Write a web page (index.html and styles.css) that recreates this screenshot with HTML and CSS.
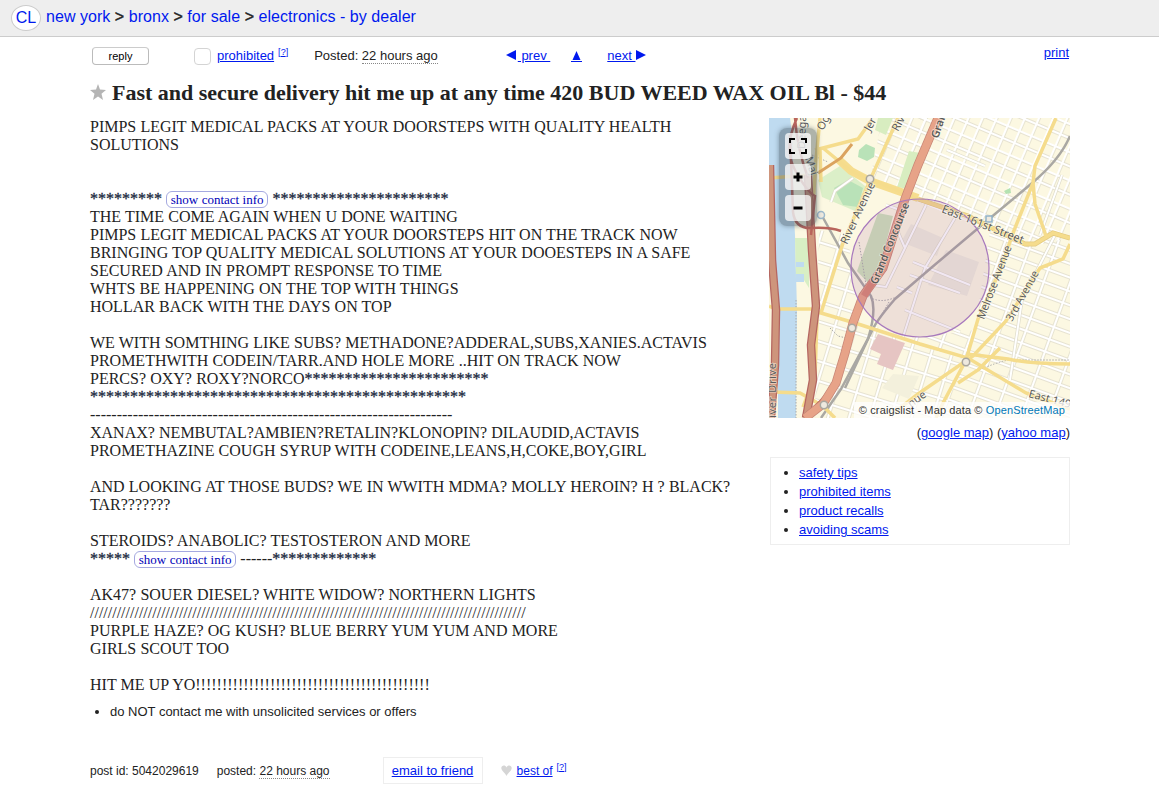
FILE: index.html
```html
<!DOCTYPE html>
<html lang="en">
<head>
<meta charset="utf-8">
<title>new york electronics - by dealer</title>
<link rel="stylesheet" href="styles.css">
</head>
<body>
<header class="crumbs">
  <a class="logo">CL</a>
  <nav><a>new york</a> <b>&gt;</b> <a>bronx</a> <b>&gt;</b> <a>for sale</a> <b>&gt;</b> <a>electronics - by dealer</a></nav>
</header>
<main class="page">
  <div class="toolbar">
    <button class="reply">reply</button>
    <span class="box"></span>
    <a class="link flag">prohibited</a><a class="help">[<u>?</u>]</a>
    <span class="posted">Posted: <span class="dotted">22 hours ago</span></span>
    <a class="link prev"><svg width="12" height="10"><path d="M0 5 10 0V10Z"/></svg> prev&nbsp;</a>
    <a class="link up"><svg width="11" height="10"><path d="M5.500 0 9.500 9H1.500Z"/></svg></a>
    <a class="link next">next <svg width="12" height="10"><path d="M11 5 1 0V10Z"/></svg></a>
    <a class="link print">print</a>
  </div>
  <h1 class="title"><svg class="star" width="17" height="16" viewBox="0 0 17 16"><path d="M8 0 10 5.600 16 6 11.500 9.700 13 16 8 12.500 3 16 4.500 9.700 0 6 6 5.600Z"/></svg><span>Fast and secure delivery hit me up at any time 420 BUD WEED WAX OIL Bl - $44</span></h1>
  <div class="columns">
    <section class="ad">
      <p>PIMPS LEGIT MEDICAL PACKS AT YOUR DOORSTEPS WITH QUALITY HEALTH</p>
      <p>SOLUTIONS</p>
      <p></p><p></p>
      <p><i>*********</i> <a class="contact">show contact info</a> <i>**********************</i></p>
      <p>THE TIME COME AGAIN WHEN U DONE WAITING</p>
      <p>PIMPS LEGIT MEDICAL PACKS AT YOUR DOORSTEPS HIT ON THE TRACK NOW</p>
      <p>BRINGING TOP QUALITY MEDICAL SOLUTIONS AT YOUR DOOESTEPS IN A SAFE</p>
      <p>SECURED AND IN PROMPT RESPONSE TO TIME</p>
      <p>WHTS BE HAPPENING ON THE TOP WITH THINGS</p>
      <p>HOLLAR BACK WITH THE DAYS ON TOP</p>
      <p></p>
      <p>WE WITH SOMTHING LIKE SUBS? METHADONE?ADDERAL,SUBS,XANIES.ACTAVIS</p>
      <p>PROMETHWITH CODEIN/TARR.AND HOLE MORE ..HIT ON TRACK NOW</p>
      <p>PERCS? OXY? ROXY?NORCO<i>***********************</i></p>
      <p><i>***********************************************</i></p>
      <p>--------------------------------------------------------------------</p>
      <p>XANAX? NEMBUTAL?AMBIEN?RETALIN?KLONOPIN? DILAUDID,ACTAVIS</p>
      <p>PROMETHAZINE COUGH SYRUP WITH CODEINE,LEANS,H,COKE,BOY,GIRL</p>
      <p></p>
      <p>AND LOOKING AT THOSE BUDS? WE IN WWITH MDMA? MOLLY HEROIN? H ? BLACK?</p>
      <p>TAR???????</p>
      <p></p>
      <p>STEROIDS? ANABOLIC? TESTOSTERON AND MORE</p>
      <p><i>*****</i> <a class="contact">show contact info</a> ------<i>*************</i></p>
      <p></p>
      <p>AK47? SOUER DIESEL? WHITE WIDOW? NORTHERN LIGHTS</p>
      <p>//////////////////////////////////////////////////////////////////////////////////////////////////</p>
      <p>PURPLE HAZE? OG KUSH? BLUE BERRY YUM YUM AND MORE</p>
      <p>GIRLS SCOUT TOO</p>
      <p></p>
      <p>HIT ME UP YO!!!!!!!!!!!!!!!!!!!!!!!!!!!!!!!!!!!!!!!!!!!!</p>
    </section>
    <aside class="side">
      <div class="map">
        <svg class="tiles" width="301" height="300" viewBox="769 118 301 300">
          <defs>
            <pattern id="ne" width="13" height="26" patternUnits="userSpaceOnUse" patternTransform="translate(925 118) rotate(23)"><path d="M0 1H13M1 0V26M0 14H13" class="case"/><path d="M0 1H13M1 0V26M0 14H13" class="street"/></pattern>
            <pattern id="se" width="25" height="13" patternUnits="userSpaceOnUse" patternTransform="translate(1000 250) rotate(20)"><path d="M0 2H25M2 0V13" class="case"/><path d="M0 2H25M2 0V13" class="street"/></pattern>
            <pattern id="sw" width="20" height="19" patternUnits="userSpaceOnUse" patternTransform="translate(820 300) rotate(17)"><path d="M0 2H20M2 0V19" class="case"/><path d="M0 2H20M2 0V19" class="street"/></pattern>
          </defs>
          <rect x="769" y="118" width="301" height="300" fill="#fcf8e2"/>
          <path d="M920 118H1070V240L1030 246 905 197Z" fill="url(#ne)"/>
          <path d="M990 230 1030 246 1070 238V418H940L965 360 900 339 975 330Z" fill="url(#se)"/>
          <path d="M819 230 848 235 858 320 965 360 940 418H815Z" fill="url(#sw)"/>
          <path d="M882 118H925L905 195 870 180Z" fill="url(#ne)"/>
          <path d="M769 118H790C795 150 792 190 795 235L797 310 796 418H778V300L769 170Z" fill="#bfdbf0"/>
          <path d="M795 238H809V288L804 280H796Z" fill="#d8efc4"/>
          <path d="M796 262H804V267H796ZM796 274H804V282H796Z" fill="#bfdbf0"/>
          <path d="M818 180 840 166 870 190 855 211 822 197Z" fill="#dbefc8"/>
          <path d="M834 188 848 180 863 188 858 207 843 205Z" fill="#b9e2b8"/>
          <path d="M859 150 866 144 875 148 874 157 867 161 858 157Z" fill="#b9e2b8"/>
          <path d="M878 118H893L886 135 875 130ZM909 151 920 153 908 189 897 187Z" fill="#d8edc0"/>
          <path d="M1004 191 1010 188 1011 193 1006 194Z" fill="#b4e2b2"/>
          <path d="M878 213 893 216 881 263 870 285 857 271Z" fill="#cfe2ba"/>
          <path d="M878 334 905 343 893 370 877 364 881 354 870 349Z" fill="#e6c5c3"/>
          <path d="M893 374 919 376 909 399 882 388Z" fill="#f3f0dc"/>
          <path d="M911 224 943 238 937 256 901 242ZM937 268 946 250 979 262 967 296 928 285Z" fill="#f0ecdc"/>
          <path class="case" d="M831 202 835 191 853 178M947 150 985 166M1062 175 1040 235M1055 235 1022 300 1010 380M926 205 886 287 872 285M955 218 925 268 903 337M913 262 970 285M910 275 960 293M897 287 912 293M905 310 960 332M895 225 905 248M886 205 900 210"/>
          <path class="street" d="M831 202 835 191 853 178M947 150 985 166M1062 175 1040 235M1055 235 1022 300 1010 380M926 205 886 287 872 285M955 218 925 268 903 337M913 262 970 285M910 275 960 293M897 287 912 293M905 310 960 332M895 225 905 248M886 205 900 210"/>
          <g class="rail"><path d="M1070 136Q1060 160 1031 184L995 214 931 268 895 299Q875 322 871 333L841 389 821 418"/><path d="M821 214 848 263 871 296Q877 310 868 339L845 388"/></g>
          <path class="track" d="M865 294Q880 307 902 294M889 302 867 340 846 383M796 300V418M812 155 828 162M830 328 838 336 850 339M979 370Q995 363 1008 360H1070M859 242 866 285"/>
          <path class="wide" d="M838 159 851 171 870 181 918 198"/>
          <path class="ycase" d="M918 199 968 216 998 231 1025 244H1035L1053 233 1070 238"/>
          <g class="yellow">
            <path d="M823 148 851 171 870 179 901 192 918 199 968 216 998 231 1025 244H1035L1053 233 1070 238"/>
            <path d="M1056 118 1035 166 1033 183 1013 233 1001 268 978 319 966 360 943 403 936 418"/>
            <path d="M1033 183 1035 204 1046 236M1070 244 1063 259 1040 268 1006 321 973 356 918 394 895 412"/>
            <path d="M769 306 776 309H811L821 313 855 323 920 344 968 358 1026 393 1070 409"/>
            <path d="M967 354 1008 359Q1030 364 1070 364M958 383 978 370 1000 348"/>
            <path d="M898 118 871 178 843 243 835 268 821 313"/>
            <path d="M871 121 858 139 815 150M769 178 811 175M820 150 821 182M773 392 800 393 823 406 835 418M817 320 815 375 803 407M820 118 816 160 811 235"/>
          </g>
          <path d="M852 144 841 158 818 173" fill="none" stroke="#dba35f" stroke-width="3"/>
          <path class="hwycase" d="M770 165 772 260 776 310 775 365 771 418M808 175 812 250 816 306 811 345 813 380 806 418"/>
          <path class="hwy" d="M770 165 772 260 776 310 775 365 771 418M808 175 812 250 816 306 811 345 813 380 806 418"/>
          <path class="ramp" d="M797 118Q783 148 795 170T815 196L811 235M795 118Q797 148 808 178M790 135 793 212Q795 229 812 228T841 231M803 416Q823 402 835 382"/>
          <path class="concase" d="M938 118 918 165 905 199 883 268 863 296 853 323 845 353 836 383 823 404 805 418"/>
          <path class="concourse" d="M938 118 918 165 905 199 883 268 863 296 853 323 845 353 836 383 823 404 805 418"/>
          <path d="M874 280 864 296" stroke="#d98976" stroke-width="7"/>
          <circle class="area" cx="920" cy="268" r="69"/>
          <g fill="#eee9df" stroke="#aaa79f" stroke-width="1.500"><circle cx="870" cy="179" r="3.700"/><circle cx="966" cy="362" r="3.700"/><circle cx="852" cy="328" r="3.700"/><circle cx="824" cy="405" r="3.700"/><circle cx="821" cy="215" r="3.500" stroke="#9db9cc"/><path d="M986 216H992V222H986Z" stroke="#91b2c9"/></g>
          <g class="labels">
            <text transform="translate(847 245) rotate(-65)" textLength="67">River Avenue</text>
            <text class="strong" transform="translate(877 285) rotate(-68)" textLength="87" lengthAdjust="spacingAndGlyphs">Grand Concourse</text>
            <text class="strong" transform="translate(938 139) rotate(-71)">Gran</text>
            <text transform="translate(823 131) rotate(-62)">Og</text>
            <text transform="translate(870 132) rotate(-60)">Jer</text>
            <text transform="translate(898 132) rotate(-62)">Riv</text>
            <text transform="translate(805 149) rotate(-88)">Deega</text>
            <text transform="translate(805 158) rotate(72)">Maj</text>
            <text class="wider" transform="translate(941 212) rotate(21.500)" textLength="87" lengthAdjust="spacingAndGlyphs">East 161st Street</text>
            <text class="wider" transform="translate(984 320) rotate(-69)" textLength="78" lengthAdjust="spacingAndGlyphs">Melrose Avenue</text>
            <text transform="translate(1012 322) rotate(-61)" textLength="56" lengthAdjust="spacingAndGlyphs">3rd Avenue</text>
            <text transform="translate(1028 397) rotate(15)">East 149</text>
            <text transform="translate(776 363) rotate(-90)" text-anchor="end" textLength="55">iver Drive</text>
            <text transform="translate(927 396) rotate(-36)" text-anchor="end">nue</text>
          </g>
        </svg>
        <div class="controls">
          <span><svg width="18" height="16"><path d="M1 5V1H6M12 1H17V5M17 11V15H12M6 15H1V11"/></svg></span>
          <span><svg width="18" height="16"><path class="bold" d="M4.500 8H13.500M9 3.500V12.500"/></svg></span>
          <span><svg width="18" height="16"><path class="bold" d="M4.500 8H13.500"/></svg></span>
        </div>
        <div class="credit">© craigslist - Map data © <a>OpenStreetMap</a></div>
      </div>
      <p class="maplinks">(<a class="link">google map</a>) (<a class="link">yahoo map</a>)</p>
      <ul class="tips">
        <li><a class="link">safety tips</a></li>
        <li><a class="link">prohibited items</a></li>
        <li><a class="link">product recalls</a></li>
        <li><a class="link">avoiding scams</a></li>
      </ul>
    </aside>
  </div>
  <ul class="notices"><li>do NOT contact me with unsolicited services or offers</li></ul>
  <footer class="infos">
    <span class="pid">post id: 5042029619</span>
    <span class="when">posted: <span class="dotted">22 hours ago</span></span>
    <span class="email"><a class="link">email to friend</a></span>
    <svg class="heart" width="11" height="11" viewBox="0 0 11 11"><path d="M5.500 11C4.500 8 .3 6 .3 3 .3 .2 4.300 -.5 5.500 2.500 6.700 -.5 10.700 .2 10.700 3 10.700 6 6.500 8 5.500 11Z"/></svg>
    <a class="link">best of</a><a class="help">[<u>?</u>]</a>
  </footer>
</main>
</body>
</html>
```

FILE: styles.css
```css
* { box-sizing: border-box; }
body { margin: 0; background: #fff; color: #222; font: 13px/18px "Liberation Sans", Arial, sans-serif; height: 794px; overflow: hidden; }
a { color: #0019ee; }
.link { text-decoration: underline; }
.crumbs { height: 37px; background: #eee; border-bottom: 1px solid #ccc; display: flex; padding: 5px 11px; font-size: 16px; line-height: 23px; white-space: nowrap; }
.crumbs nav { letter-spacing: .04px; }
.crumbs b { font-weight: normal; -webkit-text-stroke: .4px #222; }
.logo { width: 30px; height: 26px; border: 1px solid #ccc; border-radius: 50%; background: #fff; text-align: center; line-height: 24px; margin-right: 5px; }
.page { width: 980px; margin-left: 90px; }
.toolbar { height: 42px; padding-top: 10px; display: flex; align-items: flex-start; white-space: nowrap; }
.reply { width: 57px; height: 18px; margin-left: 2px; padding: 0; border: 1px solid #bbb; border-top-color: #ccc; border-radius: 4px; background: #fff; color: #000; font: 11px/15px "Liberation Sans", Arial, sans-serif; }
.box { width: 17px; height: 17px; margin: 1px 6px 0 45px; border: 1px solid #d4d4d4; border-radius: 4px; }
.help { font-size: 9px; line-height: 10px; margin-left: 4px; }
.posted { margin-left: 26px; }
.dotted { border-bottom: 1px dotted #888; }
.toolbar svg, .link svg { fill: #0019ee; }
.prev { margin-left: 68px; }
.up { margin-left: 21px; height: 15px; border-bottom: 1px solid #0019ee; }
.up svg { display: block; margin-top: 4px; }
.next { margin-left: 25px; }
.print { margin: -3px 1px 0 auto; }
.title { margin: 0; height: 39px; display: flex; font: bold 22px/28px "Liberation Serif", "Times New Roman", serif; white-space: nowrap; }
.star { margin: 5px 5px 0 0; fill: #b5b5b5; }
.columns { display: flex; justify-content: space-between; height: 576px; }
.ad { font: 16px/18px "Liberation Serif", "Times New Roman", serif; word-spacing: .18px; white-space: nowrap; }
.ad p { margin: 0; height: 18px; }
.ad i { font-style: normal; color: #1b2940; -webkit-text-stroke: .3px #1b2940; }
.contact { display: inline-block; height: 17px; width: 102px; border: 1px solid #a5a9e0; border-radius: 6px; text-align: center; font-size: 13px; line-height: 15px; color: #0000b8; vertical-align: top; margin-top: 1px; }
.side { width: 301px; }
.map { position: relative; width: 301px; height: 300px; overflow: hidden; }
.tiles { display: block; }
.case { fill: none; stroke: #dfdccb; stroke-width: 3.400; }
.street { fill: none; stroke: #fff; stroke-width: 2; }
.rail path { fill: none; stroke: #aaa8a3; stroke-width: 2.500; }
.track { fill: none; stroke: #aaa; stroke-width: 1; stroke-dasharray: 1.500 1.500; }
.ycase { fill: none; stroke: #e4cb80; stroke-width: 5; }
.wide { fill: none; stroke: #f6dd8e; stroke-width: 8; }
.yellow { fill: none; stroke: #f5dc8c; stroke-width: 3.500; }
.hwycase { fill: none; stroke: #b56661; stroke-width: 8.500; }
.hwy { fill: none; stroke: #ce957c; stroke-width: 6; }
.ramp { fill: none; stroke: #b9645c; stroke-width: 2.500; }
.concase { fill: none; stroke: #c88676; stroke-width: 9; }
.concourse { fill: none; stroke: #e7a388; stroke-width: 7.500; }
.area { fill: #8a3b91; fill-opacity: .12; stroke: #a778bd; stroke-width: 1.200; }
.labels { font: 11px "Noto Sans", "DejaVu Sans", sans-serif; fill: #5b5b5b; stroke: #fffdf0; stroke-opacity: .6; stroke-width: 1.500; paint-order: stroke; }
.wider { font-size: 11.500px; }
.strong { font-weight: 600; }
.controls { position: absolute; left: 10px; top: 10px; width: 38px; height: 98px; padding: 5px 6px; display: flex; flex-direction: column; gap: 5px; border-radius: 8px; background: rgba(60, 75, 85, .4); box-shadow: 0 0 5px rgba(60, 75, 85, .5); }
.controls span { height: 26px; display: flex; align-items: center; justify-content: center; border-radius: 4px; background: rgba(255, 255, 255, .75); }
.controls path { fill: none; stroke: #000; stroke-width: 2; }
.controls .bold { stroke-width: 3; }
.credit { position: absolute; right: 0; bottom: 0; height: 16px; padding: 0 5px; background: rgba(255, 255, 255, .75); color: #333; font-size: 11px; letter-spacing: .12px; line-height: 16px; white-space: nowrap; }
.credit a { color: #0078b8; }
.maplinks { margin: 6px 0 15px; text-align: right; }
.tips { margin: 0 0 0 1px; padding: 5px 0 5px 28px; height: 88px; border: 1px solid #eee; line-height: 19px; }
.notices { margin: 9px 0 0; padding-left: 20px; }
.infos { display: flex; align-items: center; margin-top: 36px; height: 27px; white-space: nowrap; font-size: 12px; }
.when { margin-left: 18px; }
.email { margin: 0 18px 0 53px; width: 100px; height: 27px; border: 1px solid #eee; text-align: center; line-height: 25px; font-size: 13px; }
.heart { fill: #d5d5d5; margin-right: 5px; }
.infos .help { margin-top: -8px; }
```
